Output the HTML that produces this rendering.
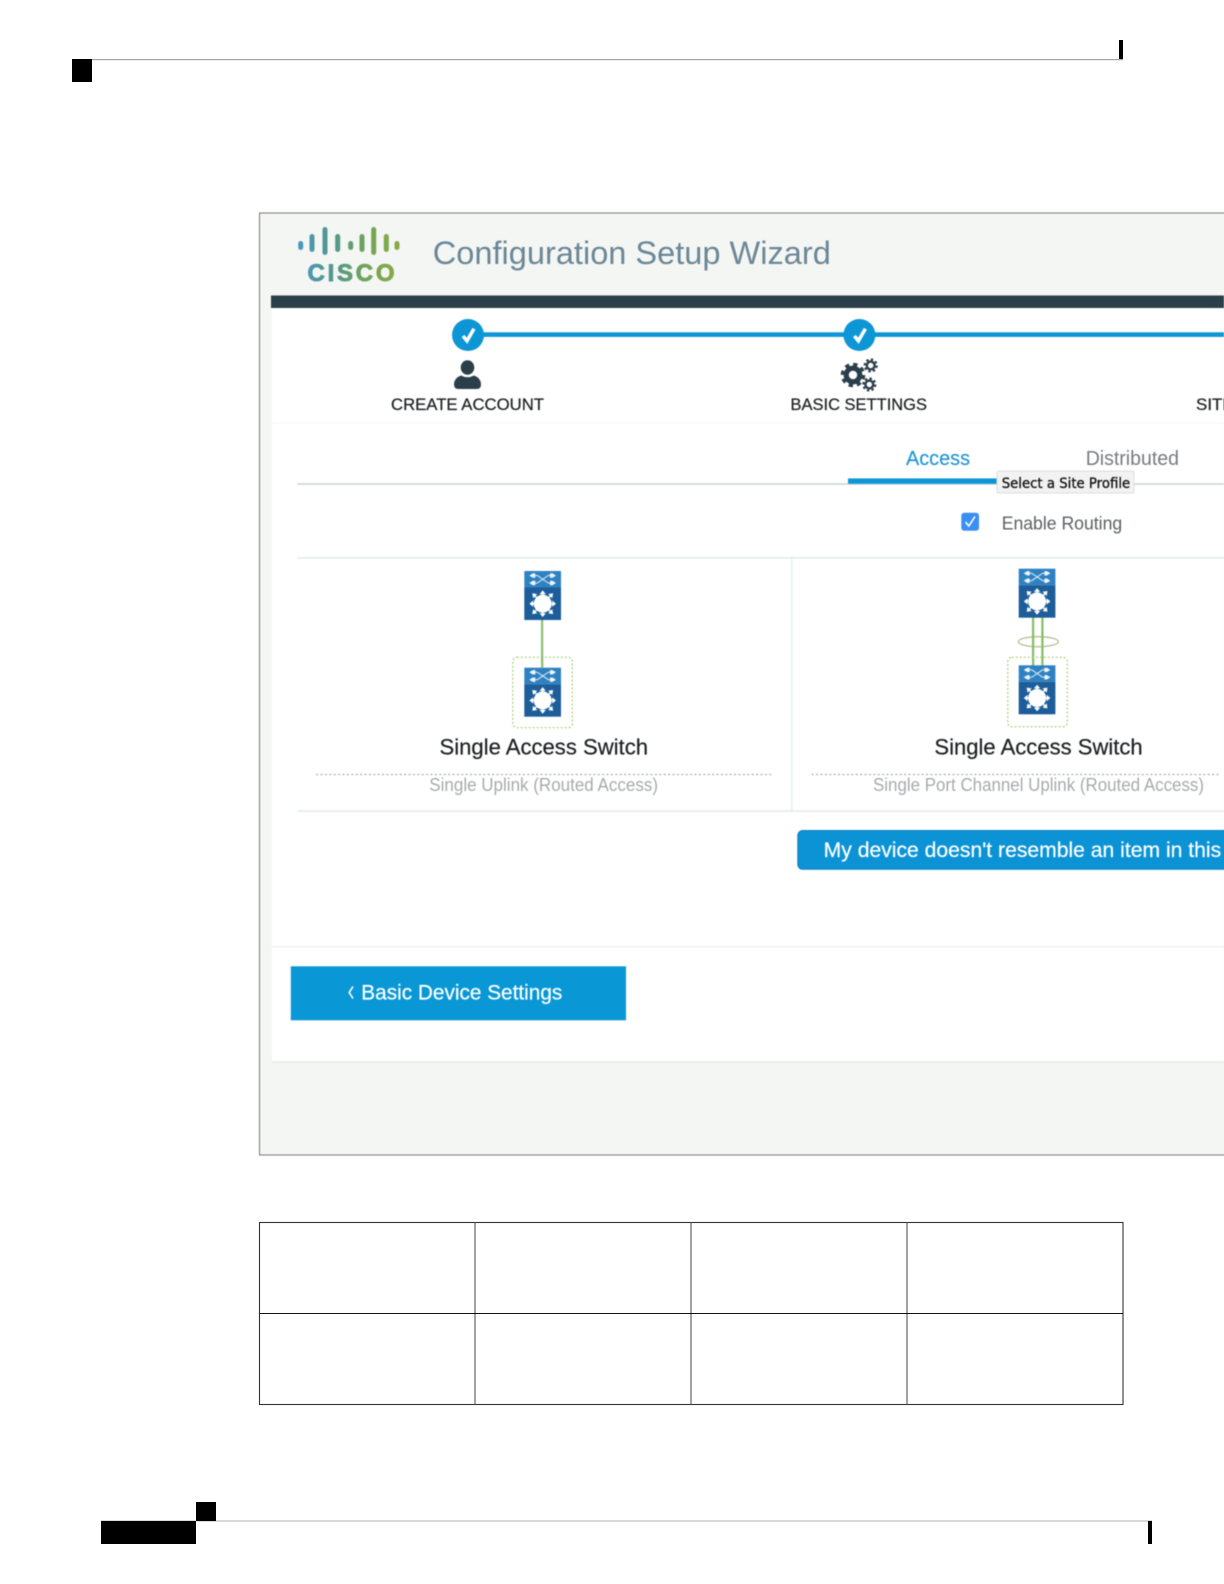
<!DOCTYPE html>
<html lang="en"><head><meta charset="utf-8"><title>Configuration Setup Wizard</title>
<style>
html,body{margin:0;padding:0;background:#fff;width:1224px;height:1584px;overflow:hidden}
svg{display:block;position:absolute;left:0;top:0}
text{font-family:"Liberation Sans",sans-serif;white-space:pre}
.shot{filter:blur(.45px)}
</style></head><body>
<svg width="1224" height="1584" viewBox="0 0 1224 1584" xmlns="http://www.w3.org/2000/svg">
<defs>
<linearGradient id="lg" gradientUnits="userSpaceOnUse" x1="298" y1="0" x2="400" y2="0">
<stop offset="0" stop-color="#4d97bd"/><stop offset=".35" stop-color="#52988c"/><stop offset=".65" stop-color="#6fa35c"/><stop offset="1" stop-color="#8aab42"/>
</linearGradient>
<g id="sw">
<rect width="36.7" height="16.5" fill="#2f82c2"/>
<rect y="16.5" width="36.7" height="32.5" fill="#1d5d99"/>
<g stroke="#dfeaf4" stroke-width="1" fill="none">
<path d="M8 4.5H13L24 12H29M8 12H13L24 4.5H29"/>
</g>
<g fill="#eef4f9">
<path d="M5 4.6l3.5-2.2h2.5v4.4h-2.5zM5 12l3.5-2.2h2.5v4.4h-2.5zM31.7 4.6l-3.5-2.2h-2.5v4.4h2.5zM31.7 12l-3.5-2.2h-2.5v4.4h2.5z"/>
</g>
<circle cx="18.4" cy="32.7" r="9" fill="#fff"/>
<g stroke="#fff" stroke-width="1.5">
<path d="M18.4 21V44.4M6.7 32.7H30.1M10.2 24.5L26.6 40.9M26.6 24.5L10.2 40.9"/>
</g>
<g fill="#fff">
<path d="M18.4 19.4l3.2 3.8h-6.4zM18.4 46l3.2-3.8h-6.4zM5.1 32.7l3.8-3.2v6.4zM31.7 32.7l-3.8-3.2v6.4z"/>
<path d="M8 22.3l5 .8-4.2 4.2zM28.8 22.3l-5 .8 4.2 4.2zM8 43.1l5-.8-4.2-4.2zM28.8 43.1l-5-.8 4.2-4.2z"/>
</g>
</g>
<g id="tick"><circle r="16" fill="#0d96d6"/><path d="M-5 1L-1 5.8L6 -6.2" fill="none" stroke="#fff" stroke-width="3.5"/></g>
</defs>

<!-- page furniture -->
<rect x="92" y="59" width="1031" height="1.2" fill="#a5a5a5"/>
<rect x="72" y="59" width="20" height="23" fill="#000"/>
<rect x="1119" y="40" width="4" height="19" fill="#000"/>
<rect x="101" y="1520" width="1051" height="2" fill="#d9d9d9"/>
<rect x="101" y="1521" width="95" height="23" fill="#000"/>
<rect x="196" y="1502" width="20" height="19" fill="#000"/>
<rect x="1148" y="1521" width="4" height="23" fill="#000"/>

<g class="shot">
<!-- frame -->
<rect x="259.5" y="213" width="970" height="942" fill="#f4f6f4" stroke="#777" stroke-width="1"/>
<rect x="272" y="307" width="952" height="756" fill="#fff"/>
<rect x="271" y="295.5" width="953" height="12.5" fill="#2b3f4a"/>
<rect x="272" y="422.5" width="952" height="1.4" fill="#f6f7f6"/>
<rect x="272" y="945.8" width="952" height="2" fill="#f2f3f2"/>
<rect x="272" y="1061" width="952" height="2" fill="#eceeec"/>

<!-- logo -->
<g stroke="url(#lg)" stroke-width="5" stroke-linecap="round" fill="none">
<path d="M300.7 243.5v4M312 236.5v13M325 229.5v23M337.7 236.5v13M350.7 243.5v4M362 236.5v13M373.7 229.5v23M386.3 236.5v13M397 243.5v4"/>
</g>
<text x="307.5" y="281" font-size="24" font-weight="700" fill="url(#lg)" stroke="url(#lg)" stroke-width=".9" textLength="87" lengthAdjust="spacing">CISCO</text>

<text x="432.8" y="264" font-size="32" fill="#6b8796" textLength="398" lengthAdjust="spacingAndGlyphs">Configuration Setup Wizard</text>

<!-- stepper -->
<rect x="467" y="332.3" width="757" height="4.6" fill="#0d96d6"/>
<use href="#tick" x="468" y="335"/>
<use href="#tick" x="859.4" y="335"/>

<g fill="#2b3f4a">
<ellipse cx="467.5" cy="367.5" rx="6.8" ry="7.2"/>
<path d="M454 384.5Q454 378 461 375.5Q467.5 379 474 375.5Q481 378 481 384.5Q481 389 476.5 389H458.5Q454 389 454 384.5Z"/>
</g>
<g fill="none" stroke="#2b3f4a">
<circle cx="853" cy="375" r="6.8" stroke-width="5.2"/>
<circle cx="853" cy="375" r="10.6" stroke-width="3.4" stroke-dasharray="4.3 4"/>
<circle cx="870.7" cy="365.5" r="3.9" stroke-width="2.4"/>
<circle cx="870.7" cy="365.5" r="6" stroke-width="2.2" stroke-dasharray="2.4 2.3"/>
<circle cx="869.3" cy="384.5" r="3.9" stroke-width="2.4"/>
<circle cx="869.3" cy="384.5" r="6" stroke-width="2.2" stroke-dasharray="2.4 2.3"/>
</g>

<text x="391" y="410" font-size="17" fill="#1f2326" stroke="#1f2326" stroke-width=".25" textLength="153" lengthAdjust="spacingAndGlyphs">CREATE ACCOUNT</text>
<text x="790.5" y="410" font-size="17" fill="#1f2326" stroke="#1f2326" stroke-width=".25" textLength="136.5" lengthAdjust="spacingAndGlyphs">BASIC SETTINGS</text>
<text x="1196" y="410" font-size="17" fill="#1f2326" stroke="#1f2326" stroke-width=".25">SITE PROFILE</text>

<!-- tabs -->
<text x="906" y="465" font-size="20" fill="#1f95d4" stroke="#1f95d4" stroke-width=".15" textLength="64" lengthAdjust="spacingAndGlyphs">Access</text>
<text x="1085.7" y="465" font-size="20" fill="#777c7f" textLength="93.3" lengthAdjust="spacingAndGlyphs">Distributed</text>
<rect x="297" y="483" width="927" height="2" fill="#d9dadb"/>
<rect x="848" y="478.4" width="150" height="5.4" fill="#0d96d6"/>
<rect x="997" y="471" width="137" height="22" rx="1.5" fill="#f2f2f2" stroke="#dedede" stroke-width="1"/>
<text x="1001.7" y="488" font-size="14" fill="#111" stroke="#111" stroke-width=".3" style="font-family:'DejaVu Sans',sans-serif" textLength="128.5" lengthAdjust="spacingAndGlyphs">Select a Site Profile</text>

<!-- routing -->
<rect x="961.3" y="512.7" width="17.7" height="18" rx="3" fill="#3b8ff0"/>
<path d="M965.5 522L968.8 526L975 516.5" fill="none" stroke="#fff" stroke-width="1.6"/>
<text x="1001.7" y="529.5" font-size="18" fill="#5c6164" textLength="120.5" lengthAdjust="spacingAndGlyphs">Enable Routing</text>

<!-- panels -->
<rect x="297" y="557" width="927" height="1.6" fill="#dfeeec"/>
<rect x="791.3" y="558" width="1" height="253" fill="#d9e9e8"/>
<rect x="297" y="810.3" width="927" height="1.6" fill="#e5ebec"/>

<!-- left switches -->
<rect x="541" y="620" width="2.2" height="48" fill="#8dbf6f"/>
<use href="#sw" x="524.3" y="571"/>
<use href="#sw" x="524.3" y="667.7"/>
<rect x="512.8" y="657.3" width="59.5" height="70.4" rx="4" fill="none" stroke="#a6d070" stroke-width="1.2" stroke-dasharray="2 2"/>
<rect x="541" y="655" width="2.2" height="13" fill="#8dbf6f"/>

<!-- right switches -->
<ellipse cx="1038.3" cy="641.7" rx="20" ry="5" fill="none" stroke="#b0c090" stroke-width="1.3"/>
<rect x="1032" y="617" width="2.2" height="49" fill="#85bd63"/>
<rect x="1041.3" y="617" width="2.2" height="49" fill="#85bd63"/>
<use href="#sw" x="1018.7" y="568.7"/>
<use href="#sw" x="1018.7" y="665.3"/>
<rect x="1007.8" y="657.3" width="59.5" height="69.4" rx="4" fill="none" stroke="#a6d070" stroke-width="1.2" stroke-dasharray="2 2"/>

<text x="439.5" y="754.3" font-size="22" fill="#1d2023" stroke="#1d2023" stroke-width=".2" textLength="208.5" lengthAdjust="spacingAndGlyphs">Single Access Switch</text>
<text x="934.4" y="754.3" font-size="22" fill="#1d2023" stroke="#1d2023" stroke-width=".2" textLength="208.3" lengthAdjust="spacingAndGlyphs">Single Access Switch</text>
<path d="M316 774.5H772M811.6 774.5H1220" stroke="#bdbdbd" stroke-width="1.4" stroke-dasharray="2.2 2.2" fill="none"/>
<text x="429.3" y="791" font-size="18" fill="#a6abae" textLength="228.7" lengthAdjust="spacingAndGlyphs">Single Uplink (Routed Access)</text>
<text x="873" y="791" font-size="18" fill="#a6abae" textLength="331" lengthAdjust="spacingAndGlyphs">Single Port Channel Uplink (Routed Access)</text>

<!-- buttons -->
<rect x="797.8" y="830.5" width="450" height="38.8" rx="5" fill="#0b93d6"/>
<rect x="797.8" y="830.5" width="450" height="38.8" rx="5" fill="none" stroke="#0d7fb8" stroke-width="1"/>
<text x="823.7" y="856.8" font-size="21" fill="#fff" stroke="#fff" stroke-width=".2" textLength="397.5" lengthAdjust="spacingAndGlyphs">My device doesn't resemble an item in this</text>
<text x="1227" y="856.8" font-size="21" fill="#fff">list</text>

<rect x="290.8" y="966.3" width="335.2" height="54" fill="#0a97d6"/>
<path d="M353 986.5L349.2 992.5L353 998.5" fill="none" stroke="#fff" stroke-width="1.6"/>
<text x="361.3" y="999.3" font-size="21.5" fill="#fff" stroke="#fff" stroke-width=".2" textLength="201" lengthAdjust="spacingAndGlyphs">Basic Device Settings</text>
</g>

<!-- table -->
<g fill="none">
<rect x="259.5" y="1222.5" width="863.5" height="182" stroke="#333" stroke-width="1.1"/>
<path d="M475 1222.5V1404.5M691 1222.5V1404.5M907 1222.5V1404.5" stroke="#555" stroke-width="1.1"/>
<path d="M259.5 1313.5H1123" stroke="#111" stroke-width="1.1"/>
</g>
</svg>
</body></html>
